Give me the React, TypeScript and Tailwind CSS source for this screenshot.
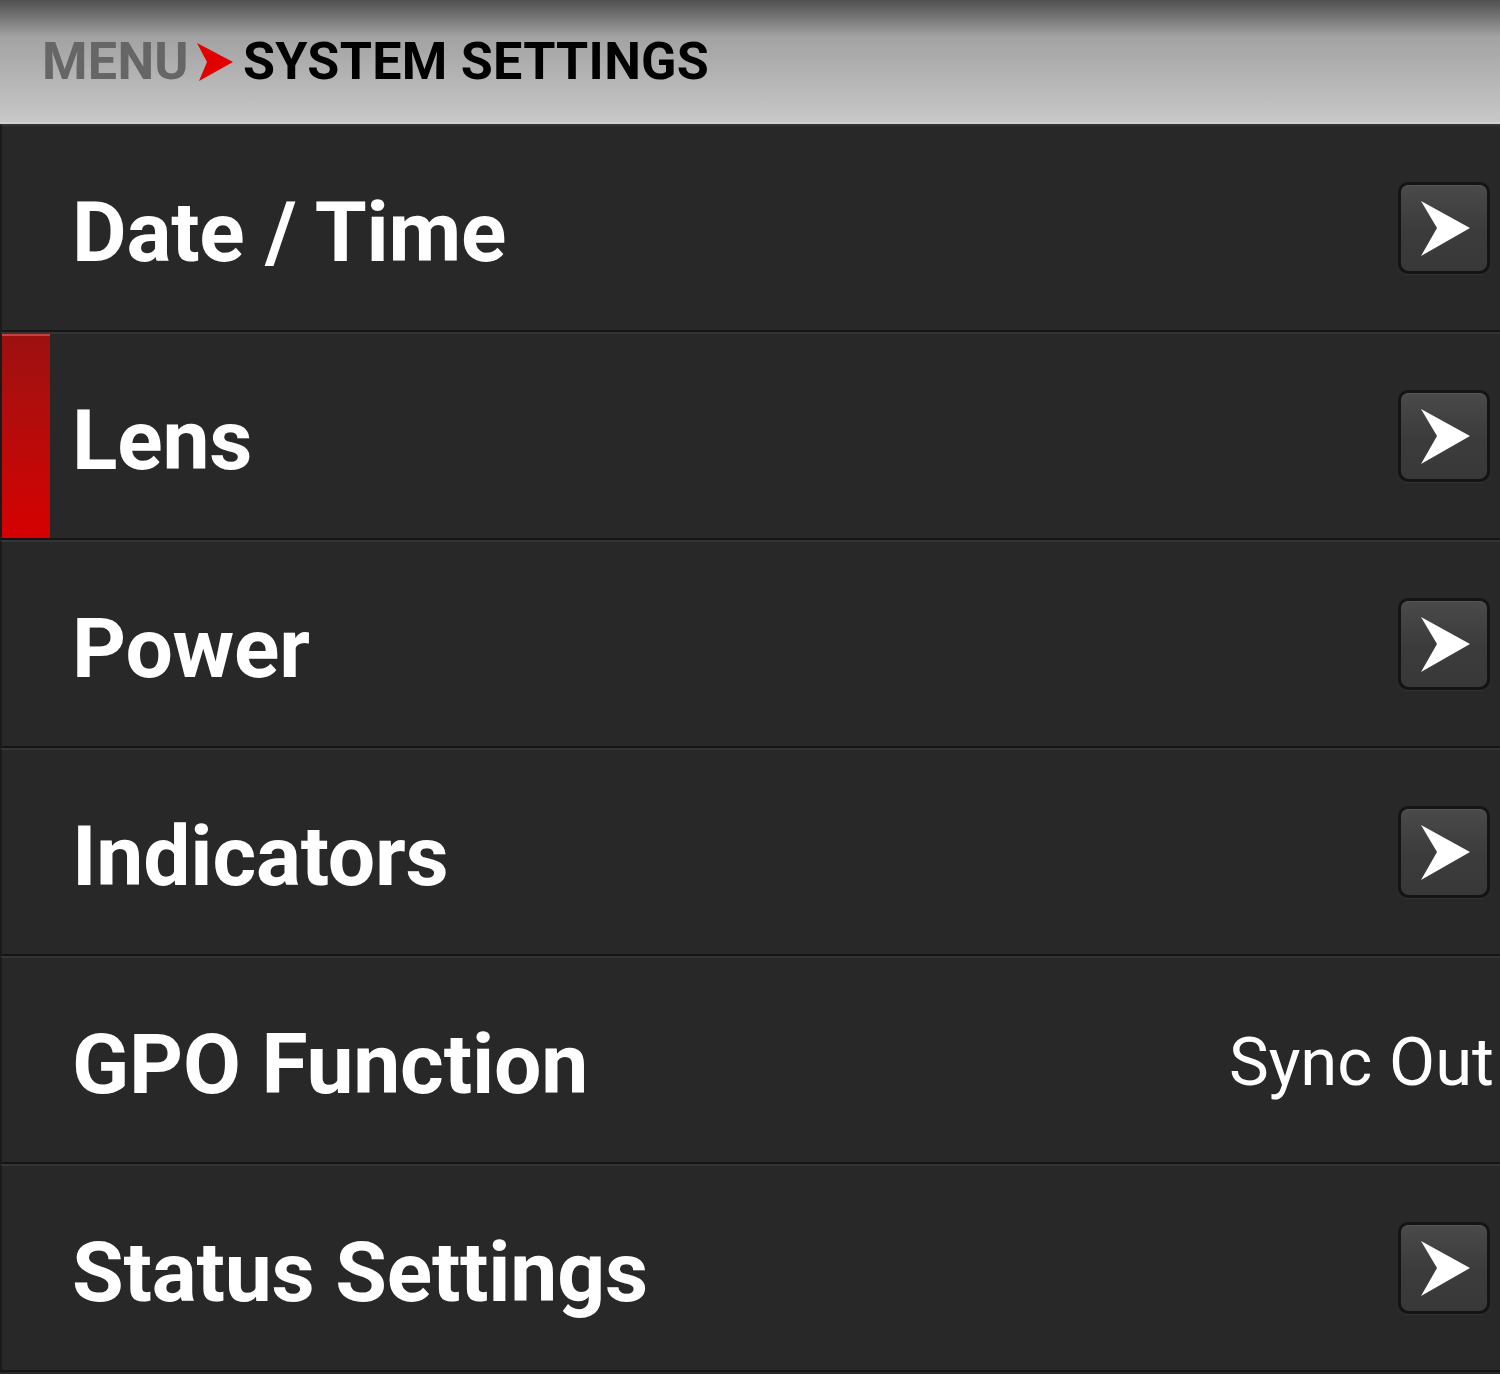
import React from "react";

function ArrowButton() {
  return (
    <div className="w-[92px] h-[92px] rounded-[10px] bg-[#141414] p-[3px] shadow-[0_1px_0_#333]">
      <div className="w-full h-full rounded-[8px] bg-gradient-to-b from-[#4a4a4a] via-[#3c3c3c] to-[#383838] shadow-[inset_0_1px_0_#555]">
        <svg width="86" height="86" viewBox="0 0 86 86" className="block">
          <polygon points="20,16 69,43 20,71 36,43" fill="#ffffff" />
        </svg>
      </div>
    </div>
  );
}

function Row({ label, selected, value }: { label: string; selected?: boolean; value?: string }) {
  return (
    <div className="h-[208px] flex items-stretch bg-[#282828] border-t-2 border-t-[#343434] border-b-2 border-b-[#151515] border-l-2 border-l-[#1a1a1a]">
      <div className={selected ? "w-[48px] bg-gradient-to-b from-[#9c1010] to-[#d60000] shadow-[inset_0_2px_0_#c84040]" : "w-[48px]"} />
      <div className="flex-1 flex items-center pl-[22px] pt-[10px] text-white font-bold text-[84px] leading-none tracking-[-0.2px]">
        {label}
      </div>
      <div className="flex items-center pr-[10px]">
        {value ? (
          <span className="text-white text-[67px] leading-none font-normal mr-[-4px] pt-[4px]">{value}</span>
        ) : (
          <ArrowButton />
        )}
      </div>
    </div>
  );
}

export default function App() {
  return (
    <div className="w-[1500px] h-[1374px] overflow-hidden bg-[#282828]" style={{ fontFamily: "Roboto, 'Liberation Sans', sans-serif" }}>
      <div className="h-[124px] bg-gradient-to-b from-[#505050] via-[#a2a2a2] via-30% to-[#c8c8c8] flex items-center pl-[42px] border-b-2 border-b-[#d0d0d0]">
        <div className="flex items-center text-[52px] font-bold leading-none tracking-[0.3px] mt-[2px]">
          <span className="text-[#666666]">MENU</span>
          <svg width="36" height="38" viewBox="0 0 36 38" className="ml-[8px] mr-[10px]">
            <polygon points="0,0 36,19 2,38 10,19" fill="#e00000" />
          </svg>
          <span className="text-black">SYSTEM SETTINGS</span>
        </div>
      </div>
      <Row label="Date / Time" />
      <Row label="Lens" selected />
      <Row label="Power" />
      <Row label="Indicators" />
      <Row label="GPO Function" value="Sync Out" />
      <Row label="Status Settings" />
    </div>
  );
}
